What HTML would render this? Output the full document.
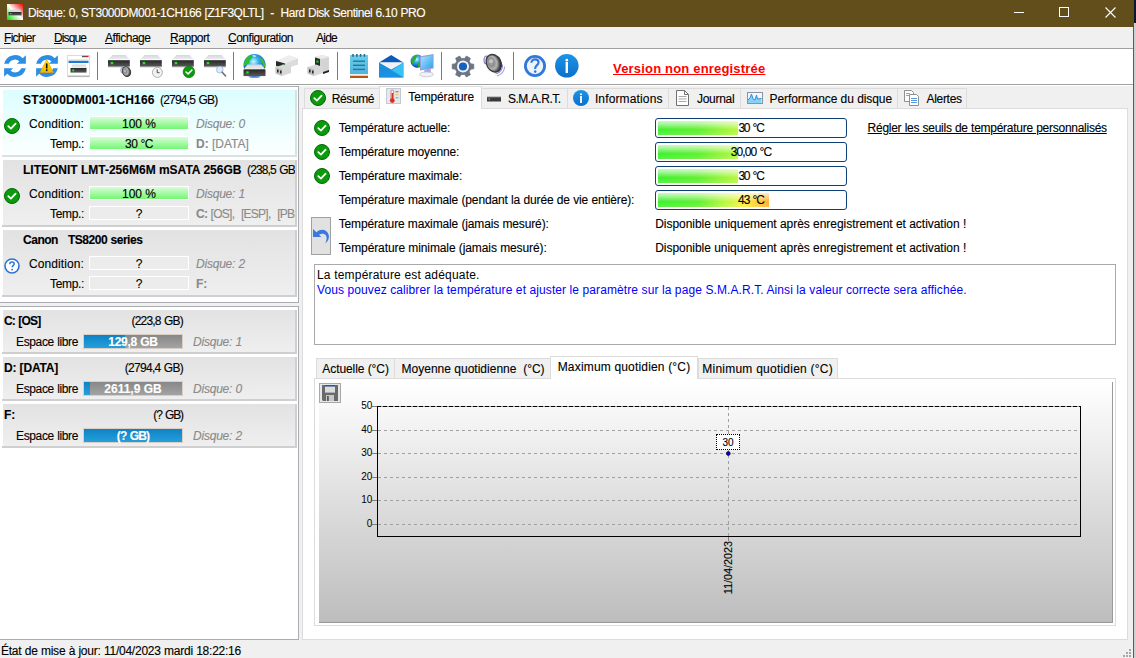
<!DOCTYPE html>
<html><head><meta charset="utf-8">
<style>
*{box-sizing:border-box;margin:0;padding:0}
html,body{width:1136px;height:658px;overflow:hidden;background:#d4d4d4}
body{position:relative;font-family:"Liberation Sans",sans-serif;font-size:12px;color:#000;-webkit-text-stroke:0.12px currentColor}
.a{position:absolute}
.t{position:absolute;white-space:nowrap;line-height:12px;font-size:12px}
.b{font-weight:bold}
.i{font-style:italic}
.g{color:#8a8a8a}
svg{position:absolute;overflow:visible}
</style></head><body>
<svg width="0" height="0" style="position:absolute">
<defs>
<linearGradient id="gplate" x1="0" y1="0" x2="0" y2="1"><stop offset="0" stop-color="#d4d6da"></stop><stop offset="1" stop-color="#eeeff1"></stop></linearGradient>
<linearGradient id="gbody" x1="0" y1="0" x2="0" y2="1"><stop offset="0" stop-color="#262626"></stop><stop offset="1" stop-color="#5a5a5a"></stop></linearGradient>
<linearGradient id="gnote" x1="0" y1="0" x2="0" y2="1"><stop offset="0" stop-color="#6dcdef"></stop><stop offset="1" stop-color="#4fb3dc"></stop></linearGradient>
<linearGradient id="ginfo" x1="0" y1="0" x2="0" y2="1"><stop offset="0" stop-color="#1d94e4"></stop><stop offset="1" stop-color="#0a6fcf"></stop></linearGradient>
<linearGradient id="gwarn" x1="0" y1="0" x2="0" y2="1"><stop offset="0" stop-color="#ffe800"></stop><stop offset="1" stop-color="#f7b500"></stop></linearGradient>
<radialGradient id="gglobe" cx="0.45" cy="0.35" r="0.65"><stop offset="0" stop-color="#c8f8ff"></stop><stop offset="0.35" stop-color="#38b4ec"></stop><stop offset="0.8" stop-color="#1a60c8"></stop><stop offset="1" stop-color="#0a2a90"></stop></radialGradient>
<radialGradient id="gspk" cx="0.45" cy="0.4" r="0.6"><stop offset="0" stop-color="#dcdcdc"></stop><stop offset="0.5" stop-color="#8a8a8a"></stop><stop offset="1" stop-color="#2a2a2a"></stop></radialGradient>
<linearGradient id="gmon" x1="0" y1="0" x2="1" y2="1"><stop offset="0" stop-color="#a8e4ff"></stop><stop offset="1" stop-color="#2aa0ec"></stop></linearGradient>

<g id="ick"><circle cx="8" cy="8" r="7.5" fill="#0a9a0a" stroke="#05670a" stroke-width="1"></circle><path d="M4.3 8.2L6.9 10.6L11.6 5.6" fill="none" stroke="#fff" stroke-width="1.8" stroke-linecap="round" stroke-linejoin="round"></path></g>
<g id="iq"><circle cx="8" cy="8" r="7" fill="#fff" stroke="#2f74d0" stroke-width="1.6"></circle><path d="M5.8 6.2C5.8 4.8 6.8 4 8 4C9.3 4 10.2 4.8 10.2 5.9C10.2 7.3 8.2 7.5 8.2 9.2" fill="none" stroke="#2f74d0" stroke-width="1.5"></path><circle cx="8.1" cy="11.6" r="0.95" fill="#2f74d0"></circle></g>

<g id="irefresh"><g fill="#2b8fe6"><path d="M0.2 8.8A11 11 0 0 1 19.6 4.3L16.2 7.2A6.6 6.6 0 0 0 4.8 8.8Z"></path><path d="M12.8 8.8L21.9 8.8L21.9 0.2Z"></path><g transform="rotate(180 11 11)"><path d="M0.2 8.8A11 11 0 0 1 19.6 4.3L16.2 7.2A6.6 6.6 0 0 0 4.8 8.8Z"></path><path d="M12.8 8.8L21.9 8.8L21.9 0.2Z"></path></g></g></g>

<g id="idrive"><path d="M4.5 0H17.5L21.8 4.6H0Z" fill="url(#gplate)"></path><rect x="0" y="4.6" width="21.8" height="0.8" fill="#f8f8f8"></rect><rect x="0" y="5.2" width="21.8" height="6.6" fill="url(#gbody)"></rect><rect x="0" y="11.6" width="21.8" height="0.8" fill="#bdbdbd"></rect><rect x="2.7" y="6.9" width="2.5" height="2.3" fill="#22e622"></rect></g>

<g id="iwin"><rect x="0.5" y="0.5" width="22" height="21" fill="#fff" stroke="#dcdcdc"></rect><rect x="1" y="20.5" width="21.5" height="1.6" fill="#b8b8b8"></rect><rect x="1.5" y="4.3" width="20" height="1.2" fill="#f0dcc8"></rect><rect x="1.5" y="5.8" width="20" height="2.2" fill="#1a7ad8"></rect><rect x="15" y="0.8" width="4" height="1.4" fill="#555"></rect><rect x="19" y="0.8" width="2.5" height="1.4" fill="#e02020"></rect><path d="M5.5 9.5H18.5L20 13H4Z" fill="url(#gplate)"></path><rect x="3.5" y="13" width="16" height="4.6" fill="url(#gbody)"></rect><rect x="5.3" y="14.4" width="1.9" height="1.9" fill="#22e622"></rect></g>

<g id="iclock"><circle cx="5.4" cy="5.4" r="5" fill="#f2f2f2" stroke="#a8a8a8" stroke-width="0.9"></circle><path d="M5.2 2.4V5.7H7.6" fill="none" stroke="#404040" stroke-width="0.9"></path></g>
<g id="ibigck"><circle cx="5.9" cy="5.9" r="5.8" fill="#0a9a0a" stroke="#066a0a" stroke-width="0.6"></circle><path d="M3 6L5.1 7.9L8.9 4.1" fill="none" stroke="#fff" stroke-width="1.5" stroke-linecap="round" stroke-linejoin="round"></path></g>
<g id="imag"><circle cx="3.8" cy="3.7" r="3.3" fill="#dcecfc" stroke="#a0b8d0" stroke-width="0.9"></circle><path d="M6.2 6.2L9.6 10" stroke="#707070" stroke-width="1.6" stroke-linecap="round"></path></g>
<g id="ismspk"><ellipse cx="2.8" cy="4.2" rx="2" ry="3" fill="#e8e8f8" stroke="#8080c8" stroke-width="0.8"></ellipse><ellipse cx="6.5" cy="5.6" rx="4" ry="5" transform="rotate(-25 6.5 5.6)" fill="url(#gspk2)" stroke="#3a3a3a" stroke-width="0.9"></ellipse></g>

<g id="iglobe"><circle cx="11.5" cy="11" r="11" fill="url(#gglobe)"></circle><path d="M1 10C1.5 6 3.5 3 7 1.5C9 1.5 10 2.5 9 4C7.5 5.5 6.5 7 6 9C5 10 3 10.5 1 12Z" fill="#2cc02c"></path><path d="M3 11C4 13 5 14 6 15L2 15C1.5 13.5 1.5 12 3 11Z" fill="#1a9a2a"></path><path d="M17.5 3C20.5 5 22 8 22.5 12.5L20 14C20.5 11 19.5 9 18.5 8C17 6.5 17 4.5 17.5 3Z" fill="#38c038"></path><path d="M9.5 1.5C11 1 12.5 1.2 13 2.2C12 3 10.5 3 9.5 1.5Z" fill="#e8f8e8"></path><path d="M4.6 10.5H18.4L22.5 15.5H0.5Z" fill="url(#gplate)"></path><rect x="0.5" y="15.5" width="22" height="6.6" fill="url(#gbody)"></rect><rect x="3.3" y="17.3" width="2.4" height="2.3" fill="#22e622"></rect><ellipse cx="11.5" cy="22.8" rx="6" ry="0.9" fill="#3a78c8"></ellipse></g>

<g id="idock1"><path d="M1 6L14 0.5L23 3.5L23 9.5L10 14L1 11Z" fill="#dcdcdc"></path><path d="M1 6L10 8.5L23 3.5L14 0.5Z" fill="#eeeeee"></path><path d="M1 6L10 8.5L10 14L1 11Z" fill="#2a2a2a"></path><rect x="7" y="9.5" width="2" height="1.3" fill="#22d022"></rect><path d="M0.5 12L9 9.5L16 12L16 18L7 21L0.5 18.5Z" fill="#d8d8d8"></path><path d="M0.5 12L7 14L7 21L0.5 18.5Z" fill="#c4c4c4"></path><rect x="2" y="14.5" width="1.6" height="3" fill="#2a2a2a"></rect><rect x="5" y="15.5" width="1.6" height="3" fill="#2a2a2a"></rect></g>
<g id="idock2"><path d="M8 2L15 0L22 2L22 16L15 18L8 16Z" fill="#d4d4d4"></path><path d="M8 2L15 0L22 2L15 4Z" fill="#ececec"></path><path d="M8 2.5L13 4L13 15L8 14Z" fill="#2a2a2a"></path><rect x="9.3" y="5.5" width="2.3" height="2.2" fill="#22c022"></rect><path d="M0.5 12L9 9.5L16 12L16 18L7 21L0.5 18.5Z" fill="#d8d8d8"></path><path d="M0.5 12L7 14L7 21L0.5 18.5Z" fill="#c4c4c4"></path><rect x="2" y="14.5" width="1.6" height="3" fill="#2a2a2a"></rect><rect x="5" y="15.5" width="1.6" height="3" fill="#2a2a2a"></rect><path d="M16 17L22 15V17L16 19Z" fill="#222"></path></g>

<g id="inote"><rect x="0" y="1" width="18" height="19" fill="url(#gnote)"></rect><rect x="2.2" y="0" width="1.6" height="2.8" fill="#1e6f8c"></rect><rect x="6" y="0" width="1.6" height="2.8" fill="#1e6f8c"></rect><rect x="9.8" y="0" width="1.6" height="2.8" fill="#1e6f8c"></rect><rect x="13.6" y="0" width="1.6" height="2.8" fill="#1e6f8c"></rect><rect x="3" y="6.5" width="12" height="1.4" fill="#1f7a98"></rect><rect x="3" y="10.6" width="12" height="1.4" fill="#1f7a98"></rect><rect x="3" y="14.7" width="12" height="1.4" fill="#1f7a98"></rect><rect x="0" y="20" width="18" height="1.8" fill="#eee"></rect><rect x="0" y="21.8" width="18" height="2.2" fill="#b8560e"></rect></g>

<g id="imail"><path d="M0 7.4L12.2 0L24.4 7.4Z" fill="#0a5cb8"></path><path d="M1.2 7.4H23.2L12.2 14Z" fill="#f2f2f2"></path><path d="M0 7.4L12.2 14.5L24.4 7.4V22.5H0Z" fill="#1a8fe0"></path><path d="M24.4 7.4V22.5L12.2 15.5Z" fill="#3ac2f2"></path><path d="M0 22.5L12.2 14.5L24.4 22.5Z" fill="#1c92e2" opacity="0.6"></path></g>

<g id="inet"><circle cx="6.2" cy="7.2" r="6.6" fill="url(#gglobe)"></circle><path d="M1 6C1.8 3 3.5 1.5 6 1C6 3 5 5.5 3 7.5C2.5 9 3 10 2 11C1 9.5 0.8 7.5 1 6Z M7 8.5C9 8 10 10 9 12.5L6.5 13C7.5 11.5 6.5 10 7 8.5Z" fill="#2cb02c"></path><path d="M9 2.2L22.6 0V14.5L9 16.4Z" fill="#9c9cdc"></path><path d="M10 3.2L21.8 1.4V13.6L10 15.3Z" fill="url(#gmon)"></path><path d="M13.5 15.5L19.5 14.3L20 19H13Z" fill="#a8a8d8"></path><ellipse cx="15.5" cy="20.4" rx="7" ry="2.4" fill="#f2f2f2" stroke="#c0c0dc" stroke-width="0.8"></ellipse></g>

<g id="igear"><path d="M20.13 14.30 L23.35 13.91 L23.35 9.09 L20.13 8.70 L18.49 5.86 L19.76 2.88 L15.58 0.47 L13.64 3.06 L10.36 3.06 L8.42 0.47 L4.24 2.88 L5.51 5.86 L3.87 8.70 L0.65 9.09 L0.65 13.91 L3.87 14.30 L5.51 17.14 L4.24 20.12 L8.42 22.53 L10.36 19.94 L13.64 19.94 L15.58 22.53 L19.76 20.12 L18.49 17.14Z" fill="#6b7583" stroke="#6b7583" stroke-width="0.8" stroke-linejoin="round" transform="translate(12 11.5) scale(0.95) translate(-12 -11.5)"></path><circle cx="12" cy="11.5" r="6" fill="#f4f4f4"></circle><circle cx="12" cy="11.5" r="4.1" fill="#1462c4"></circle></g>

<g id="ispk"><radialGradient id="gspk2" cx="0.35" cy="0.38" r="0.65"><stop offset="0" stop-color="#d8d8d8"></stop><stop offset="0.3" stop-color="#8a8a8a"></stop><stop offset="0.6" stop-color="#b4b4b4"></stop><stop offset="0.85" stop-color="#5a5a5a"></stop><stop offset="1" stop-color="#262626"></stop></radialGradient><ellipse cx="3.6" cy="6" rx="2.6" ry="4" fill="#f0f0ff" stroke="#7c7cc4" stroke-width="1.1"></ellipse><ellipse cx="10.8" cy="9.3" rx="7.2" ry="9.2" transform="rotate(-28 10.8 9.3)" fill="url(#gspk2)" stroke="#3a3a3a" stroke-width="1.3"></ellipse><ellipse cx="8.2" cy="7.6" rx="2.6" ry="3" fill="#9898a8"></ellipse><ellipse cx="8" cy="7.2" rx="1.8" ry="2" fill="#c8c8c8"></ellipse><path d="M19.6 10.5A9 9 0 0 1 12.5 20" fill="none" stroke="#8a8ad8" stroke-width="1.1"></path><path d="M21.8 12.5A11.5 11.5 0 0 1 14 22" fill="none" stroke="#a0a0e4" stroke-width="1.1"></path></g>

<g id="ihelp"><circle cx="11" cy="11" r="9.6" fill="#eef4fc" stroke="#3278d8" stroke-width="2.8"></circle><path d="M7.4 7.8C7.4 5.6 9 4.4 11 4.4C13 4.4 14.6 5.6 14.6 7.6C14.6 10 11.2 10.3 11.2 13.2V14" fill="none" stroke="#3278d8" stroke-width="2.1"></path><circle cx="11.2" cy="16.6" r="1.3" fill="#3278d8"></circle></g>
<g id="iinfobig"><circle cx="11.8" cy="11.8" r="11.8" fill="url(#ginfo)"></circle><circle cx="11.8" cy="6.2" r="1.35" fill="#fff"></circle><rect x="10.6" y="8" width="2.4" height="11" fill="#fff"></rect></g>

<g id="iwarn"><path d="M6.7 0.5L13.4 13.5H0Z" fill="url(#gwarn)" stroke="#e8a000" stroke-width="0.6" stroke-linejoin="round"></path><rect x="5.9" y="4.2" width="1.6" height="5.4" rx="0.7" fill="#111"></rect><circle cx="6.7" cy="11.3" r="0.95" fill="#111"></circle></g>

<g id="ititle"><defs><linearGradient id="gti" x1="0" y1="1" x2="1" y2="0"><stop offset="0" stop-color="#00e000"></stop><stop offset="0.5" stop-color="#ffffff"></stop><stop offset="1" stop-color="#f00000"></stop></linearGradient></defs><rect x="0" y="0" width="16" height="16" fill="url(#gti)"></rect><path d="M3.5 5.5H12.5L14.5 8H1.5Z" fill="#d8d8d8"></path><rect x="1.5" y="8" width="13" height="3.4" fill="url(#gbody)"></rect><rect x="3" y="9" width="1.4" height="1.2" fill="#22e622"></rect></g>

<g id="itherm"><rect x="0.5" y="0.5" width="14" height="15" fill="#e4e8f0" stroke="#c4cad4" stroke-width="1"></rect><rect x="5" y="2" width="2.6" height="10" rx="1.3" fill="#fff" stroke="#c83020" stroke-width="0.6"></rect><rect x="5.6" y="5" width="1.4" height="7" fill="#d83020"></rect><circle cx="6.3" cy="12.6" r="2.4" fill="#d83020"></circle><rect x="9.5" y="3" width="3" height="1.4" fill="#e87070"></rect><rect x="9.5" y="6" width="3" height="1.4" fill="#e8d060"></rect><rect x="9.5" y="9" width="3" height="1.4" fill="#80d080"></rect></g>
<g id="ismart"><rect x="1" y="5" width="14" height="4.5" fill="#3a3a3a"></rect><rect x="1" y="4.3" width="14" height="1" fill="#b0b0b0"></rect><rect x="2.5" y="6.5" width="1.5" height="1.3" fill="#22e622"></rect></g>
<g id="iinfo"><circle cx="8" cy="8" r="8" fill="url(#ginfo)"></circle><circle cx="8" cy="4.3" r="1" fill="#fff"></circle><rect x="7.1" y="6" width="1.8" height="7" fill="#fff"></rect></g>
<g id="ijournal"><path d="M1.5 0.5H9.5L13.5 4.5V15.5H1.5Z" fill="#fff" stroke="#707070" stroke-width="1"></path><path d="M9.5 0.5V4.5H13.5" fill="none" stroke="#707070" stroke-width="1"></path><rect x="3.5" y="6" width="8" height="0.9" fill="#a0a0a0"></rect><rect x="3.5" y="8.5" width="8" height="0.9" fill="#a0a0a0"></rect><rect x="3.5" y="11" width="8" height="0.9" fill="#a0a0a0"></rect></g>
<g id="iperf"><rect x="0.5" y="0.5" width="15" height="11" fill="#f4f8fc" stroke="#8a94a0" stroke-width="1"></rect><path d="M1 8L3 6L4.5 2L6 7L8 8L9.5 3L10.5 7L14.5 6.5V11H1Z" fill="#8ad0f8"></path><path d="M1 8L3 6L4.5 2L6 7L8 8L9.5 3L10.5 7L14.5 6.5" fill="none" stroke="#2a90e0" stroke-width="1"></path></g>
<g id="ialert"><path d="M0.5 0.5H7.5L9.5 2.5V11.5H0.5Z" fill="#fff" stroke="#909090"></path><path d="M5.5 4.5H12.5L14.5 6.5V15.5H5.5Z" fill="#fff" stroke="#909090"></path><rect x="2" y="3" width="4" height="0.9" fill="#6aa0e0"></rect><rect x="2" y="5" width="3" height="0.9" fill="#6aa0e0"></rect><rect x="7" y="8" width="6" height="0.9" fill="#4a8ee0"></rect><rect x="7" y="10" width="6" height="0.9" fill="#4a8ee0"></rect><rect x="7" y="12" width="6" height="0.9" fill="#4a8ee0"></rect></g>
<g id="iundo"><path d="M0 2L0 10L8.3 10L6 7.8C8.5 6 11.5 6.3 13 8.5C14.2 10.5 13.5 14 12.2 16.5C15.5 14 16.5 10.5 15.6 7.5C14.5 3.5 9 0.5 3.4 5.2Z" fill="#3a78e0"></path></g>
<g id="isave"><path d="M0 0H16V16H1L0 15Z" fill="#6a6a6a"></path><rect x="3" y="0" width="10" height="1.6" fill="#0a5cc4"></rect><rect x="3" y="1.6" width="10" height="6" fill="#dcdcdc"></rect><rect x="4" y="10" width="8" height="6" fill="#c8c8c8"></rect><rect x="5" y="11" width="1.8" height="5" fill="#5a5a5a"></rect></g>
</defs></svg>

<!-- desktop strip right -->
<div class="a" style="left:1134px;top:0;width:2px;height:23px;background:#0b1828"></div>
<div class="a" style="left:1134px;top:23px;width:2px;height:635px;background:#d0d0d0"></div>

<!-- title bar -->
<div class="a" style="left:0;top:0;width:1134px;height:27px;background:#614e1a"></div>
<div class="a" style="left:1133px;top:27px;width:1px;height:631px;background:#6e5a26"></div>
<div class="t" style="left: 28px; top: 7px; color: rgb(255, 255, 255); white-space: pre; letter-spacing: -0.475px; display: inline-block; word-spacing: 0.475px;">Disque: 0, ST3000DM001-1CH166 [Z1F3QLTL]  -  Hard Disk Sentinel 6.10 PRO</div>
<!-- window buttons -->
<div class="a" style="left:1014px;top:12px;width:10px;height:1px;background:#fff"></div>
<div class="a" style="left:1059px;top:7px;width:10px;height:10px;border:1px solid #fff"></div>
<svg style="left:1105px;top:7px" width="11" height="11"><path d="M0.5 0.5L10.5 10.5M10.5 0.5L0.5 10.5" stroke="#fff" stroke-width="1.1"></path></svg>

<!-- menu bar -->
<div class="a" style="left:0;top:27px;width:1133px;height:21px;background:#f0f0f0"></div>
<div class="a" style="left:0;top:48px;width:1133px;height:1px;background:#a0a0a0"></div>
<div class="t" style="left: 4px; top: 32px; letter-spacing: -0.719px; display: inline-block;"><u>F</u>ichier</div>
<div class="t" style="left: 54px; top: 32px; letter-spacing: -0.893px; display: inline-block;"><u>D</u>isque</div>
<div class="t" style="left: 105px; top: 32px; letter-spacing: -0.481px; display: inline-block;"><u>A</u>ffichage</div>
<div class="t" style="left: 170px; top: 32px; letter-spacing: -0.458px; display: inline-block;"><u>R</u>apport</div>
<div class="t" style="left: 228px; top: 32px; letter-spacing: -0.492px; display: inline-block;"><u>C</u>onfiguration</div>
<div class="t" style="left: 316px; top: 32px; letter-spacing: -0.762px; display: inline-block;">A<u>i</u>de</div>

<!-- toolbar -->
<div class="a" style="left:0;top:49px;width:1133px;height:35px;background:#fff"></div>
<div class="a" style="left:0;top:84px;width:1133px;height:1px;background:#a0a0a0"></div>
<div class="a" style="left:0;top:85px;width:1133px;height:1px;background:#fff"></div>
<div class="a" style="left:97px;top:52px;width:1px;height:28px;background:#7a7a7a"></div>
<div class="a" style="left:233px;top:52px;width:1px;height:28px;background:#7a7a7a"></div>
<div class="a" style="left:337px;top:52px;width:1px;height:28px;background:#7a7a7a"></div>
<div class="a" style="left:441px;top:52px;width:1px;height:28px;background:#7a7a7a"></div>
<div class="a" style="left:513px;top:52px;width:1px;height:28px;background:#7a7a7a"></div>
<div class="t b" style="left: 613px; top: 61.5px; font-size: 13px; line-height: 13px; color: rgb(255, 0, 0); text-decoration: underline; -webkit-text-stroke: 0px; letter-spacing: 0.185px; display: inline-block;">Version non enregistrée</div>
<!--TOOL-->
<svg style="left:4px;top:55px" width="22" height="22"><use href="#irefresh"></use></svg>
<svg style="left:36px;top:55px" width="22" height="22"><use href="#irefresh"></use></svg>
<svg style="left:40px;top:59px" width="14" height="14"><use href="#iwarn"></use></svg>
<svg style="left:67px;top:55px" width="23" height="23"><use href="#iwin"></use></svg>
<svg style="left:108px;top:55px" width="22" height="13"><use href="#idrive"></use></svg>
<svg style="left:140px;top:55px" width="22" height="13"><use href="#idrive"></use></svg>
<svg style="left:172px;top:55px" width="22" height="13"><use href="#idrive"></use></svg>
<svg style="left:204px;top:55px" width="22" height="13"><use href="#idrive"></use></svg>
<svg style="left:120px;top:66px" width="11" height="11"><use href="#ismspk"></use></svg>
<svg style="left:152px;top:67px" width="11" height="11"><use href="#iclock"></use></svg>
<svg style="left:183px;top:66px" width="12" height="12"><use href="#ibigck"></use></svg>
<svg style="left:216px;top:66px" width="11" height="11"><use href="#imag"></use></svg>
<svg style="left:243px;top:54px" width="23" height="24"><use href="#iglobe"></use></svg>
<svg style="left:275px;top:55px" width="23" height="22"><use href="#idock1"></use></svg>
<svg style="left:307px;top:55px" width="23" height="22"><use href="#idock2"></use></svg>
<svg style="left:350px;top:54px" width="18" height="24"><use href="#inote"></use></svg>
<svg style="left:379px;top:54.5px" width="24" height="23"><use href="#imail"></use></svg>
<svg style="left:411px;top:54px" width="23" height="23"><use href="#inet"></use></svg>
<svg style="left:451px;top:54.5px" width="24" height="23"><use href="#igear"></use></svg>
<svg style="left:483px;top:54px" width="23" height="23"><use href="#ispk"></use></svg>
<svg style="left:524px;top:55px" width="22" height="22"><use href="#ihelp"></use></svg>
<svg style="left:555px;top:54px" width="24" height="24"><use href="#iinfobig"></use></svg>
<svg style="left:7px;top:4px" width="16" height="16"><use href="#ititle"></use></svg>
<!--/TOOL-->

<!-- main area bg -->
<div class="a" style="left:0;top:86px;width:1133px;height:554px;background:#f0f0f0"></div>

<!-- left panel frame 1 -->
<div class="a" style="left:0;top:86px;width:299px;height:217px;background:#fff;border-top:1px solid #a9acb1;border-right:1px solid #a9acb1;border-bottom:1px solid #a9acb1"></div>
<!-- left panel frame 2 -->
<div class="a" style="left:0;top:306px;width:299px;height:334px;background:#fff;border-top:1px solid #a9acb1;border-right:1px solid #a9acb1;border-bottom:1px solid #a9acb1"></div>

<!--LEFT-->
<div class="a" style="left:3px;top:90px;width:292px;height:65px;background:linear-gradient(#dcfdfe,#fbffff)"></div>
<div class="a" style="left:295px;top:90px;width:2px;height:67px;background:#dbe1e1"></div>
<div class="a" style="left:2px;top:155px;width:295px;height:2px;background:#dbe1e1"></div>
<div class="a" style="left:3px;top:90px;width:292px;height:65px;overflow:hidden">
<div class="t b" style="left: 20px; top: 4px; letter-spacing: 0.158px; display: inline-block;">ST3000DM001-1CH166</div>
<div class="t" style="left: 157px; top: 4px; letter-spacing: -0.798px; display: inline-block; word-spacing: 0.798px;">(2794,5 GB)</div>
<div class="t" style="left:25px;top:28px;width:56px;text-align:right"><span style="letter-spacing: 0.095px; display: inline-block;">Condition:</span></div>
<div class="t" style="left:25px;top:48px;width:56px;text-align:right"><span style="letter-spacing: -0.336px; display: inline-block;">Temp.:</span></div>
<div class="t i g" style="left: 193px; top: 28px; letter-spacing: -0.213px; display: inline-block; word-spacing: 0.213px;">Disque: 0</div>
<div class="t g" style="left:193px;top:48px"><span class="b">D:</span> [DATA]</div>
</div>
<div class="a" style="left:89px;top:116px;width:100px;height:14px;border:1px solid #fff;background:linear-gradient(#dafcda,#72f872)"></div>
<div class="t" style="left:89px;top:118px;width:100px;text-align:center">100 %</div>
<div class="a" style="left:89px;top:136px;width:100px;height:14px;border:1px solid #fff;background:linear-gradient(#dafcda,#72f872)"></div>
<div class="t" style="left:89px;top:138px;width:100px;text-align:center"><span style="letter-spacing: -0.539px; display: inline-block; word-spacing: 0.539px;">30 °C</span></div>
<svg style="left:4px;top:118px" width="16" height="16"><use href="#ick"></use></svg>
<div class="a" style="left:3px;top:160px;width:292px;height:65px;background:linear-gradient(#e2e2e2,#efefef)"></div>
<div class="a" style="left:295px;top:160px;width:2px;height:67px;background:#cfcfcf"></div>
<div class="a" style="left:2px;top:225px;width:295px;height:2px;background:#cfcfcf"></div>
<div class="a" style="left:3px;top:160px;width:292px;height:65px;overflow:hidden">
<div class="t b" style="left: 20px; top: 4px; letter-spacing: -0.003px; display: inline-block; word-spacing: 0.003px;">LITEONIT LMT-256M6M mSATA 256GB</div>
<div class="t" style="left: 244px; top: 4px; letter-spacing: -0.856px; display: inline-block; word-spacing: 0.856px;">(238,5 GB)</div>
<div class="t" style="left:25px;top:28px;width:56px;text-align:right"><span style="letter-spacing: 0.095px; display: inline-block;">Condition:</span></div>
<div class="t" style="left:25px;top:48px;width:56px;text-align:right"><span style="letter-spacing: -0.336px; display: inline-block;">Temp.:</span></div>
<div class="t i g" style="left: 193px; top: 28px; letter-spacing: -0.213px; display: inline-block; word-spacing: 0.213px;">Disque: 1</div>
<div class="t g" style="left: 193px; top: 48px; letter-spacing: -0.728px; display: inline-block; word-spacing: 0.728px;"><span class="b">C:</span> [OS],&nbsp; [ESP],&nbsp; [PBI</div>
</div>
<div class="a" style="left:89px;top:186px;width:100px;height:14px;border:1px solid #fff;background:linear-gradient(#dafcda,#72f872)"></div>
<div class="t" style="left:89px;top:188px;width:100px;text-align:center">100 %</div>
<div class="a" style="left:89px;top:206px;width:100px;height:14px;border:1px solid #fff;background:#ececec"></div>
<div class="t" style="left:89px;top:208px;width:100px;text-align:center">?</div>
<svg style="left:4px;top:188px" width="16" height="16"><use href="#ick"></use></svg>
<div class="a" style="left:3px;top:230px;width:292px;height:65px;background:linear-gradient(#e2e2e2,#efefef)"></div>
<div class="a" style="left:295px;top:230px;width:2px;height:67px;background:#cfcfcf"></div>
<div class="a" style="left:2px;top:295px;width:295px;height:2px;background:#cfcfcf"></div>
<div class="a" style="left:3px;top:230px;width:292px;height:65px;overflow:hidden">
<div class="t b" style="left: 20px; top: 4px; letter-spacing: -0.471px; display: inline-block; word-spacing: 0.471px;">Canon &nbsp; TS8200 series</div>

<div class="t" style="left:25px;top:28px;width:56px;text-align:right"><span style="letter-spacing: 0.095px; display: inline-block;">Condition:</span></div>
<div class="t" style="left:25px;top:48px;width:56px;text-align:right"><span style="letter-spacing: -0.336px; display: inline-block;">Temp.:</span></div>
<div class="t i g" style="left: 193px; top: 28px; letter-spacing: -0.213px; display: inline-block; word-spacing: 0.213px;">Disque: 2</div>
<div class="t g" style="left:193px;top:48px"><span class="b">F:</span> </div>
</div>
<div class="a" style="left:89px;top:256px;width:100px;height:14px;border:1px solid #fff;background:#ececec"></div>
<div class="t" style="left:89px;top:258px;width:100px;text-align:center">?</div>
<div class="a" style="left:89px;top:276px;width:100px;height:14px;border:1px solid #fff;background:#ececec"></div>
<div class="t" style="left:89px;top:278px;width:100px;text-align:center">?</div>
<svg style="left:4px;top:258px" width="16" height="16"><use href="#iq"></use></svg>
<div class="a" style="left:3px;top:310px;width:292px;height:42px;background:linear-gradient(#e2e2e2,#efefef)"></div>
<div class="a" style="left:295px;top:310px;width:2px;height:44px;background:#cfcfcf"></div>
<div class="a" style="left:2px;top:352px;width:295px;height:2px;background:#cfcfcf"></div>
<div class="t b" style="left:4px;top:315px"><span style="letter-spacing: -0.838px; display: inline-block; word-spacing: 0.838px;">C: [OS]</span></div>
<div class="t" style="left:83px;top:315px;width:100px;text-align:right"><span style="letter-spacing: -0.8px; display: inline-block; word-spacing: 0.8px;">(223,8 GB)</span></div>
<div class="t" style="left: 16px; top: 336px; letter-spacing: -0.368px; display: inline-block; word-spacing: 0.368px;">Espace libre</div>
<div class="a" style="left:83px;top:334px;width:100px;height:15px;border:1px solid #d9cfc6;background:linear-gradient(#878787,#a3a3a3)"></div>
<div class="a" style="left:84px;top:335px;width:41px;height:13px;background:linear-gradient(#0f82c4,#24a0dc)"></div>
<div class="t b" style="left:83px;top:336px;width:100px;text-align:center;color:#fff"><span style="letter-spacing: -0.268px; display: inline-block; word-spacing: 0.268px;">129,8 GB</span></div>
<div class="t i g" style="left: 193px; top: 336px; letter-spacing: -0.213px; display: inline-block; word-spacing: 0.213px;">Disque: 1</div>
<div class="a" style="left:3px;top:357px;width:292px;height:42px;background:linear-gradient(#e2e2e2,#efefef)"></div>
<div class="a" style="left:295px;top:357px;width:2px;height:44px;background:#cfcfcf"></div>
<div class="a" style="left:2px;top:399px;width:295px;height:2px;background:#cfcfcf"></div>
<div class="t b" style="left:4px;top:362px"><span style="letter-spacing: -0.193px; display: inline-block; word-spacing: 0.193px;">D: [DATA]</span></div>
<div class="t" style="left:83px;top:362px;width:100px;text-align:right"><span style="letter-spacing: -0.717px; display: inline-block; word-spacing: 0.717px;">(2794,4 GB)</span></div>
<div class="t" style="left: 16px; top: 383px; letter-spacing: -0.368px; display: inline-block; word-spacing: 0.368px;">Espace libre</div>
<div class="a" style="left:83px;top:381px;width:100px;height:15px;border:1px solid #d9cfc6;background:linear-gradient(#878787,#a3a3a3)"></div>
<div class="a" style="left:84px;top:382px;width:6px;height:13px;background:linear-gradient(#0f82c4,#24a0dc)"></div>
<div class="t b" style="left:83px;top:383px;width:100px;text-align:center;color:#fff"><span style="letter-spacing: -0.009px; display: inline-block; word-spacing: 0.009px;">2611,9 GB</span></div>
<div class="t i g" style="left: 193px; top: 383px; letter-spacing: -0.213px; display: inline-block; word-spacing: 0.213px;">Disque: 0</div>
<div class="a" style="left:3px;top:404px;width:292px;height:42px;background:linear-gradient(#e2e2e2,#efefef)"></div>
<div class="a" style="left:295px;top:404px;width:2px;height:44px;background:#cfcfcf"></div>
<div class="a" style="left:2px;top:446px;width:295px;height:2px;background:#cfcfcf"></div>
<div class="t b" style="left:4px;top:409px">F:</div>
<div class="t" style="left:83px;top:409px;width:100px;text-align:right"><span style="letter-spacing: -1.129px; display: inline-block; word-spacing: 1.129px;">(? GB)</span></div>
<div class="t" style="left: 16px; top: 430px; letter-spacing: -0.368px; display: inline-block; word-spacing: 0.368px;">Espace libre</div>
<div class="a" style="left:83px;top:428px;width:100px;height:15px;border:1px solid #d9cfc6;background:linear-gradient(#878787,#a3a3a3)"></div>
<div class="a" style="left:84px;top:429px;width:98px;height:13px;background:linear-gradient(#0f82c4,#24a0dc)"></div>
<div class="t b" style="left:83px;top:430px;width:100px;text-align:center;color:#fff"><span style="letter-spacing: -0.831px; display: inline-block; word-spacing: 0.831px;">(? GB)</span></div>
<div class="t i g" style="left: 193px; top: 430px; letter-spacing: -0.213px; display: inline-block; word-spacing: 0.213px;">Disque: 2</div>
<!--/LEFT-->

<!-- right tab control -->
<div class="a" style="left:302px;top:108px;width:826px;height:532px;background:#fff;border:1px solid #dcdcdc"></div>
<!--TABS-->
<div class="a" style="left:304px;top:88px;width:76px;height:20px;background:#f0f0f0;border:1px solid #dcdcdc;border-bottom:none"></div>
<div class="t" style="left: 331.8px; top: 93px; letter-spacing: -0.415px; display: inline-block;">Résumé</div>
<div class="a" style="left:481px;top:88px;width:87px;height:20px;background:#f0f0f0;border:1px solid #dcdcdc;border-bottom:none"></div>
<div class="t" style="left: 507.9px; top: 93px; letter-spacing: -0.454px; display: inline-block;">S.M.A.R.T.</div>
<div class="a" style="left:567px;top:88px;width:102px;height:20px;background:#f0f0f0;border:1px solid #dcdcdc;border-bottom:none"></div>
<div class="t" style="left: 594.9px; top: 93px; letter-spacing: 0.139px; display: inline-block;">Informations</div>
<div class="a" style="left:668px;top:88px;width:73px;height:20px;background:#f0f0f0;border:1px solid #dcdcdc;border-bottom:none"></div>
<div class="t" style="left: 697px; top: 93px; letter-spacing: -0.294px; display: inline-block;">Journal</div>
<div class="a" style="left:740px;top:88px;width:158px;height:20px;background:#f0f0f0;border:1px solid #dcdcdc;border-bottom:none"></div>
<div class="t" style="left: 769.5px; top: 93px; letter-spacing: -0.083px; display: inline-block; word-spacing: 0.083px;">Performance du disque</div>
<div class="a" style="left:897px;top:88px;width:70px;height:20px;background:#f0f0f0;border:1px solid #dcdcdc;border-bottom:none"></div>
<div class="t" style="left: 926.5px; top: 93px; letter-spacing: -0.308px; display: inline-block;">Alertes</div>
<div class="a" style="left:379px;top:86px;width:103px;height:23px;background:#fff;border:1px solid #dcdcdc;border-bottom:none"></div>
<div class="t" style="left: 408.3px; top: 91px; letter-spacing: -0.152px; display: inline-block;">Température</div>
<svg style="left:310px;top:90px" width="16" height="16"><use href="#ick"></use></svg>
<svg style="left:386px;top:88px" width="16" height="16"><use href="#itherm"></use></svg>
<svg style="left:486px;top:92px" width="16" height="16"><use href="#ismart"></use></svg>
<svg style="left:573px;top:90px" width="16" height="16"><use href="#iinfo"></use></svg>
<svg style="left:675px;top:90px" width="16" height="16"><use href="#ijournal"></use></svg>
<svg style="left:747px;top:92px" width="16" height="12"><use href="#iperf"></use></svg>
<svg style="left:904px;top:90px" width="16" height="16"><use href="#ialert"></use></svg>
<!--/TABS-->
<!--CONTENT-->
<div class="t" style="left: 338.7px; top: 121.8px; letter-spacing: -0.2px; display: inline-block; word-spacing: 0.2px;">Température actuelle:</div>
<div class="t" style="left: 338.7px; top: 145.8px; letter-spacing: -0.153px; display: inline-block; word-spacing: 0.153px;">Température moyenne:</div>
<div class="t" style="left: 338.7px; top: 169.8px; letter-spacing: -0.095px; display: inline-block; word-spacing: 0.095px;">Température maximale:</div>
<div class="t" style="left: 338.7px; top: 193.8px; letter-spacing: -0.137px; display: inline-block; word-spacing: 0.137px;">Température maximale (pendant la durée de vie entière):</div>
<div class="t" style="left: 338.7px; top: 217.8px; letter-spacing: -0.139px; display: inline-block; word-spacing: 0.139px;">Température maximale (jamais mesuré):</div>
<div class="t" style="left: 338.7px; top: 241.8px; letter-spacing: -0.1px; display: inline-block; word-spacing: 0.1px;">Température minimale (jamais mesuré):</div>
<svg style="left:314px;top:120px" width="16" height="16"><use href="#ick"></use></svg>
<svg style="left:314px;top:144px" width="16" height="16"><use href="#ick"></use></svg>
<svg style="left:314px;top:168px" width="16" height="16"><use href="#ick"></use></svg>
<div class="a" style="left:655px;top:118px;width:192px;height:20px;border:1.5px solid #0e3f78;border-radius:3px;background:#fff"></div>
<div class="a" style="left:658px;top:121px;width:80px;height:14px;background:linear-gradient(rgba(255,255,255,0.72),rgba(255,255,255,0.5) 22%,rgba(255,255,255,0) 62%,rgba(255,255,255,0.12)),linear-gradient(90deg,#40f030,#60f030 50%,#b8f840)"></div>
<div class="t" style="left:655px;top:122px;width:192px;text-align:center"><span style="letter-spacing: -1.239px; display: inline-block; word-spacing: 1.239px;">30 °C</span></div>
<div class="a" style="left:655px;top:142px;width:192px;height:20px;border:1.5px solid #0e3f78;border-radius:3px;background:#fff"></div>
<div class="a" style="left:658px;top:145px;width:80px;height:14px;background:linear-gradient(rgba(255,255,255,0.72),rgba(255,255,255,0.5) 22%,rgba(255,255,255,0) 62%,rgba(255,255,255,0.12)),linear-gradient(90deg,#40f030,#60f030 50%,#b8f840)"></div>
<div class="t" style="left:655px;top:146px;width:192px;text-align:center"><span style="letter-spacing: -0.89px; display: inline-block; word-spacing: 0.89px;">30,00 °C</span></div>
<div class="a" style="left:655px;top:166px;width:192px;height:20px;border:1.5px solid #0e3f78;border-radius:3px;background:#fff"></div>
<div class="a" style="left:658px;top:169px;width:80px;height:14px;background:linear-gradient(rgba(255,255,255,0.72),rgba(255,255,255,0.5) 22%,rgba(255,255,255,0) 62%,rgba(255,255,255,0.12)),linear-gradient(90deg,#40f030,#60f030 50%,#b8f840)"></div>
<div class="t" style="left:655px;top:170px;width:192px;text-align:center"><span style="letter-spacing: -1.239px; display: inline-block; word-spacing: 1.239px;">30 °C</span></div>
<div class="a" style="left:655px;top:190px;width:192px;height:20px;border:1.5px solid #0e3f78;border-radius:3px;background:#fff"></div>
<div class="a" style="left:658px;top:193px;width:111px;height:14px;background:linear-gradient(rgba(255,255,255,0.72),rgba(255,255,255,0.5) 22%,rgba(255,255,255,0) 62%,rgba(255,255,255,0.12)),linear-gradient(90deg,#40f030,#60f030 36%,#b8f840 60%,#fff040 78%,#ffb030)"></div>
<div class="t" style="left:655px;top:194px;width:192px;text-align:center"><span style="letter-spacing: -1.089px; display: inline-block; word-spacing: 1.089px;">43 °C</span></div>
<div class="t" style="left: 867.6px; top: 121.6px; text-decoration: underline; letter-spacing: -0.267px; display: inline-block; word-spacing: 0.267px;">Régler les seuils de température personnalisés</div>
<div class="t" style="left: 655.2px; top: 217.8px; letter-spacing: -0.035px; display: inline-block; word-spacing: 0.035px;">Disponible uniquement après enregistrement et activation !</div>
<div class="t" style="left: 655.2px; top: 241.8px; letter-spacing: -0.035px; display: inline-block; word-spacing: 0.035px;">Disponible uniquement après enregistrement et activation !</div>
<div class="a" style="left:311px;top:217px;width:20px;height:38px;background:#e1e1e1;border:1px solid #a0a0a0"></div>
<svg style="left:313px;top:227px" width="16" height="17"><use href="#iundo"></use></svg>
<div class="a" style="left:314px;top:264px;width:802px;height:81px;background:#fff;border:1px solid #a9a9a9"></div>
<div class="t" style="left: 317px; top: 269px; -webkit-text-stroke: 0px; letter-spacing: 0.182px; display: inline-block;">La température est adéquate.</div>
<div class="t" style="left: 317px; top: 283.6px; color: rgb(0, 0, 255); -webkit-text-stroke: 0px; letter-spacing: 0.095px; display: inline-block;">Vous pouvez calibrer la température et ajuster le paramètre sur la page S.M.A.R.T. Ainsi la valeur correcte sera affichée.</div>
<div class="a" style="left:316px;top:358px;width:79px;height:20px;background:#f0f0f0;border:1px solid #dcdcdc;border-bottom:none"></div>
<div class="t" style="left: 322.3px; top: 363.1px; letter-spacing: -0.082px; display: inline-block; word-spacing: 0.082px;">Actuelle (°C)</div>
<div class="a" style="left:394px;top:358px;width:157px;height:20px;background:#f0f0f0;border:1px solid #dcdcdc;border-bottom:none"></div>
<div class="t" style="left: 401.5px; top: 363.1px; letter-spacing: 0.01px; display: inline-block;">Moyenne quotidienne&nbsp; (°C)</div>
<div class="a" style="left:698px;top:358px;width:140px;height:20px;background:#f0f0f0;border:1px solid #dcdcdc;border-bottom:none"></div>
<div class="t" style="left: 702.3px; top: 363.1px; letter-spacing: 0.234px; display: inline-block;">Minimum quotidien (°C)</div>
<div class="a" style="left:314px;top:378px;width:802px;height:248px;background:#fff;border:1px solid #dcdcdc"></div>
<div class="a" style="left:550px;top:356px;width:148px;height:23px;background:#fff;border:1px solid #dcdcdc;border-bottom:none"></div>
<div class="t" style="left: 557.7px; top: 361.3px; letter-spacing: 0.173px; display: inline-block;">Maximum quotidien (°C)</div>
<div class="a" style="left:319px;top:382px;width:794px;height:241px;background:linear-gradient(#ffffff,#bdbdbd);border-right:1px solid #999;border-bottom:1px solid #999"></div>
<div class="a" style="left:319px;top:383px;width:22px;height:20px;background:#e6e6e6;border:1px solid #a8a8a8"></div>
<svg style="left:322px;top:385px" width="16" height="16"><use href="#isave"></use></svg>
<svg style="left:0;top:0" width="1136" height="658" shape-rendering="crispEdges">
<line x1="378" y1="524.5" x2="1080" y2="524.5" stroke="#a0a0a0" stroke-width="1" stroke-dasharray="3 3"></line>
<line x1="378" y1="500.5" x2="1080" y2="500.5" stroke="#a0a0a0" stroke-width="1" stroke-dasharray="3 3"></line>
<line x1="378" y1="477.5" x2="1080" y2="477.5" stroke="#a0a0a0" stroke-width="1" stroke-dasharray="3 3"></line>
<line x1="378" y1="453.5" x2="1080" y2="453.5" stroke="#a0a0a0" stroke-width="1" stroke-dasharray="3 3"></line>
<line x1="378" y1="430.5" x2="1080" y2="430.5" stroke="#a0a0a0" stroke-width="1" stroke-dasharray="3 3"></line>
<line x1="377" y1="406.5" x2="1081" y2="406.5" stroke="#a0a0a0" stroke-width="1"></line>
<line x1="377" y1="406.5" x2="1081" y2="406.5" stroke="#000" stroke-width="1" stroke-dasharray="4 2"></line>
<path d="M377.5 406V536.5H1080.5V406" fill="none" stroke="#000" stroke-width="1.3"></path>
<line x1="372" y1="524.5" x2="377" y2="524.5" stroke="#808080" stroke-width="1"></line>
<line x1="372" y1="500.5" x2="377" y2="500.5" stroke="#808080" stroke-width="1"></line>
<line x1="372" y1="477.5" x2="377" y2="477.5" stroke="#808080" stroke-width="1"></line>
<line x1="372" y1="453.5" x2="377" y2="453.5" stroke="#808080" stroke-width="1"></line>
<line x1="372" y1="430.5" x2="377" y2="430.5" stroke="#808080" stroke-width="1"></line>
<line x1="372" y1="406.5" x2="377" y2="406.5" stroke="#808080" stroke-width="1"></line>
<line x1="728.5" y1="407" x2="728.5" y2="536" stroke="#a0a0a0" stroke-width="1" stroke-dasharray="3 3"></line>
<line x1="728.5" y1="537" x2="728.5" y2="541" stroke="#808080" stroke-width="1"></line>
</svg>
<div class="t" style="left:340px;top:518.5px;width:32.4px;text-align:right;font-size:10px;line-height:10px;-webkit-text-stroke:0">0</div>
<div class="t" style="left:340px;top:494.5px;width:32.4px;text-align:right;font-size:10px;line-height:10px;-webkit-text-stroke:0">10</div>
<div class="t" style="left:340px;top:471.5px;width:32.4px;text-align:right;font-size:10px;line-height:10px;-webkit-text-stroke:0">20</div>
<div class="t" style="left:340px;top:447.5px;width:32.4px;text-align:right;font-size:10px;line-height:10px;-webkit-text-stroke:0">30</div>
<div class="t" style="left:340px;top:424.5px;width:32.4px;text-align:right;font-size:10px;line-height:10px;-webkit-text-stroke:0">40</div>
<div class="t" style="left:340px;top:400.5px;width:32.4px;text-align:right;font-size:10px;line-height:10px;-webkit-text-stroke:0">50</div>
<div class="a" style="left:716px;top:434px;width:24px;height:16px;background:#fff;border:1px dotted #000"></div>
<div class="t" style="left:716px;top:438px;width:24px;text-align:center;font-size:10px;line-height:10px">30</div>
<svg style="left:725px;top:450px" width="7" height="7"><circle cx="3.3" cy="3.5" r="1.9" fill="#0000e0" stroke="#000" stroke-width="0.7"></circle></svg>
<div class="t" style="left:728px;top:567px;width:0;height:0"><div style="position:absolute;left:-30px;top:-5.5px;width:60px;height:11px;font-size:10.8px;line-height:11px;text-align:center;transform:rotate(-90deg)">11/04/2023</div></div>
<!--CHART-END-->
<!--/CONTENT-->

<!-- status bar -->
<div class="a" style="left:0;top:640px;width:1133px;height:18px;background:#f0f0f0"></div>
<div class="a" style="left:1129px;top:649px;width:2px;height:2px;background:#a8a8a8"></div><div class="a" style="left:1126px;top:652px;width:2px;height:2px;background:#a8a8a8"></div><div class="a" style="left:1129px;top:652px;width:2px;height:2px;background:#a8a8a8"></div><div class="a" style="left:1123px;top:655px;width:2px;height:2px;background:#a8a8a8"></div><div class="a" style="left:1126px;top:655px;width:2px;height:2px;background:#a8a8a8"></div><div class="a" style="left:1129px;top:655px;width:2px;height:2px;background:#a8a8a8"></div>
<div class="t" style="left: 1px; top: 645px; letter-spacing: -0.238px; display: inline-block; word-spacing: 0.238px;">État de mise à jour: 11/04/2023 mardi 18:22:16</div>


</body></html>
